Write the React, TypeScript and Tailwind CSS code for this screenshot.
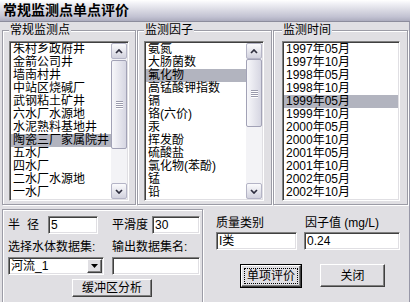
import React from 'react';

const STATIONS = ['朱村乡政府井', '金箭公司井', '墙南村井', '中站区烧碱厂', '武钢粘土矿井', '六水厂水源地', '水泥熟料基地井', '陶瓷三厂家属院井', '五水厂', '四水厂', '二水厂水源地', '一水厂'];
const FACTORS = ['氨氮', '大肠菌数', '氟化物', '高锰酸钾指数', '镉', '铬(六价)', '汞', '挥发酚', '硫酸盐', '氯化物(苯酚)', '锰', '铅'];
const TIMES = ['1997年05月', '1997年10月', '1998年05月', '1998年10月', '1999年05月', '1999年10月', '2000年05月', '2000年10月', '2001年05月', '2001年10月', '2002年05月', '2002年10月'];

// 凹陷边框（列表、输入框）
const SUNKEN =
  'border border-t-[#808080] border-l-[#808080] border-r-white border-b-white shadow-[inset_1px_1px_0_#404040,inset_-1px_-1px_0_#e0dfe3] p-px bg-white';
// 凸起按钮
const RAISED =
  'border border-t-white border-l-white border-r-[#404040] border-b-[#404040] shadow-[inset_-1px_-1px_0_#808080] bg-[#e0dfe3]';
const GROUP = 'border border-[#9c9ca6] shadow-[inset_1px_1px_0_#fff,1px_1px_0_#fff]';

function Chevron({ down }: { down?: boolean }) {
  return (
    <svg width="8" height="5" viewBox="0 0 8 5">
      <path
        d={down ? 'M1 1 L4 4 L7 1' : 'M1 4 L4 1 L7 4'}
        stroke="#2e2e3e"
        strokeWidth="1.7"
        fill="none"
      />
    </svg>
  );
}

function ArrowBtn({ down }: { down?: boolean }) {
  return (
    <div className="flex h-[16px] w-[16px] items-center justify-center rounded-[2px] border border-[#b4b4c6] bg-[linear-gradient(to_bottom,#fbfbfd,#d2d2de)]">
      <Chevron down={down} />
    </div>
  );
}

function ScrollBar({ thumb }: { thumb: string }) {
  return (
    <div className="flex h-full w-[16px] flex-col bg-[#f3f3f6]">
      <ArrowBtn />
      <div className="flex-1">
        <div
          className={`${thumb} flex items-center justify-center rounded-[2px] border border-[#a2a2b6] bg-[linear-gradient(to_right,#f7f7fa,#d6d6e2)]`}
        >
          <div className="flex flex-col gap-[1px]">
            {[0, 1, 2, 3].map((i) => (
              <div key={i} className="h-px w-[7px] bg-[#9a9aac] shadow-[0_1px_0_#fff]" />
            ))}
          </div>
        </div>
      </div>
      <ArrowBtn down />
    </div>
  );
}

function ListBox({
  items,
  selected,
  width,
  thumb,
}: {
  items: string[];
  selected: number;
  width: string;
  thumb?: string;
}) {
  return (
    <div className={`${SUNKEN} ${width} mt-[4px] h-[160px] flex`}>
      <div className="flex-1 overflow-hidden">
        {items.map((it, i) => (
          <div
            key={it}
            className={`h-[13px] whitespace-nowrap pl-[2px] text-[12px] leading-[13px] ${
              i === selected ? 'bg-[#b2b4bf]' : ''
            }`}
          >
            {it}
          </div>
        ))}
      </div>
      {thumb && <ScrollBar thumb={thumb} />}
    </div>
  );
}

function Group({ title, children, cls }: { title: string; children: React.ReactNode; cls: string }) {
  return (
    <fieldset className={`${GROUP} ${cls} mt-[1px] pb-[3px]`}>
      <legend className="ml-0 bg-[#e0dfe3] px-[1px] text-[12px] leading-[14px]">{title}</legend>
      {children}
    </fieldset>
  );
}

function Input({ value, width }: { value: string; width: string }) {
  return (
    <div className={`${SUNKEN} ${width} h-[18px] pl-[2px] text-[12px] leading-[14px]`}>{value}</div>
  );
}

export default function App() {
  return (
    <div className="flex h-[302px] w-[410px] flex-col overflow-hidden bg-[#e0dfe3] font-['Liberation_Sans','Noto_Sans_CJK_SC',sans-serif] text-black">
      {/* 标题栏 */}
      <div className="flex h-[25px] items-center border-b border-[#8c8c9c] bg-[linear-gradient(to_bottom,#ffffff_0%,#f0f0f5_18%,#d8d8e2_50%,#c2c2d2_80%,#acacbe_100%)] pl-[3px] text-[14px] font-bold">
        常规监测点单点评价
      </div>

      <div className="flex flex-1 flex-col border-r border-[#9898a8] pl-[2px] pr-[1px]">
        <div className="flex gap-[1px]">
          <Group title="常规监测点" cls="w-[134px] px-[6px]">
            <ListBox items={STATIONS} selected={7} width="w-[120px]" thumb="mt-[1px] h-[89px]" />
          </Group>
          <Group title="监测因子" cls="w-[135px] px-[6px]">
            <ListBox items={FACTORS} selected={2} width="w-[120px]" thumb="mt-0 h-[68px]" />
          </Group>
          <Group title="监测时间" cls="w-[135px] pl-[8px]">
            <ListBox items={TIMES} selected={4} width="w-[118px]" />
          </Group>
        </div>

        <div className="mt-[4px] flex">
          {/* 缓冲区 */}
          <fieldset className={`${GROUP} h-[95px] w-[201px] pl-[5px] pt-[6px] text-[12px]`}>
            <div className="flex h-[18px] items-center">
              <div className="flex w-[40px] gap-[7px]">
                <span>半</span>
                <span>径</span>
              </div>
              <Input value="5" width="w-[50px]" />
              <span className="ml-[14px] w-[40px]">平滑度</span>
              <Input value="30" width="w-[48px]" />
            </div>
            <div className="mt-[6px] flex h-[14px] leading-[14px]">
              <span className="w-[104px]">选择水体数据集:</span>
              <span>输出数据集名:</span>
            </div>
            <div className="mt-[3px] flex h-[18px]">
              <div className={`${SUNKEN} flex h-[18px] w-[96px] items-center`}>
                <span className="flex-1 pl-[1px] leading-[14px]">河流_1</span>
                <div className={`${RAISED} flex h-[14px] w-[15px] items-center justify-center`}>
                  <svg width="7" height="4" viewBox="0 0 7 4">
                    <path d="M0 0 H7 L3.5 4 Z" fill="#000" />
                  </svg>
                </div>
              </div>
              <div className="ml-[8px]">
                <Input value="" width="w-[88px]" />
              </div>
            </div>
            <div className="mt-[4px] flex">
              <div className={`${RAISED} ml-[64px] flex h-[18px] w-[80px] items-center justify-center leading-[14px]`}>
                缓冲区分析
              </div>
            </div>
          </fieldset>

          {/* 评价结果 */}
          <div className="flex flex-1 flex-col pl-[13px] pt-[7px] text-[12px]">
            <div className="flex h-[14px] leading-[14px]">
              <span className="w-[89px]">质量类别</span>
              <span>因子值 (mg/L)</span>
            </div>
            <div className="mt-[2px] flex">
              <Input value="I类" width="w-[81px]" />
              <div className="ml-[7px]">
                <Input value="0.24" width="w-[96px]" />
              </div>
            </div>
            <div className="mt-[14px] flex items-start">
              <div className="ml-[24px] border border-black">
                <div className={`${RAISED} flex h-[22px] w-[60px] items-center justify-center`}>
                  <span className="border border-dotted border-black px-[2px] leading-[14px]">单项评价</span>
                </div>
              </div>
              <div className={`${RAISED} ml-[18px] flex h-[23px] w-[65px] items-center justify-center`}>
                关闭
              </div>
            </div>
          </div>
        </div>
      </div>
    </div>
  );
}
